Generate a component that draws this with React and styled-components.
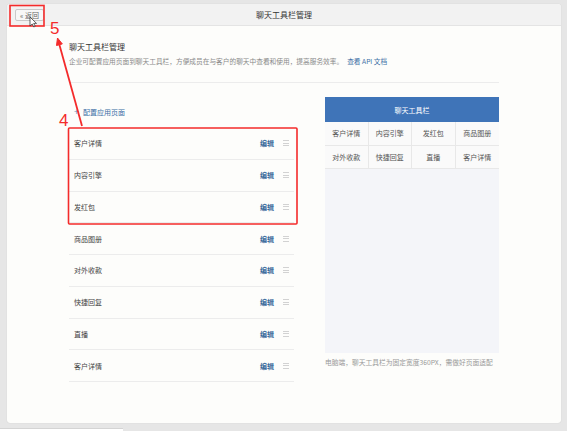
import React from "react";
import styled, { createGlobalStyle } from "styled-components";

const GlobalStyle = createGlobalStyle`
  html, body { margin: 0; padding: 0; }
  body {
    background: #e6e6e6;
    font-family: "Noto Sans CJK SC", "Noto Sans", sans-serif;
    color: #333;
    width: 567px;
    height: 431px;
    overflow: hidden;
  }
`;

const Page = styled.div`
  position: relative;
  width: 567px;
  height: 431px;
  padding: 4px 6px 0 7px;
  box-sizing: border-box;
`;

const Card = styled.div`
  width: 554px;
  height: 419px;
  background: #fdfdfb;
  border-radius: 3px;
  box-shadow: 0 0 1px rgba(0, 0, 0, 0.18);
  overflow: hidden;
`;

const Header = styled.div`
  height: 22px;
  background: #f2f2f2;
  border-bottom: 1px solid #e4e4e4;
  box-sizing: border-box;
  display: grid;
  grid-template-columns: 1fr auto 1fr;
  align-items: center;
`;

const BackButton = styled.button`
  justify-self: start;
  margin-left: 8px;
  height: 12px;
  padding: 0 4px;
  border: 1px solid #c9c9c9;
  border-radius: 2px;
  background: #f7f7f7;
  color: #666;
  font-family: inherit;
  font-size: 7px;
  line-height: 10px;
  display: flex;
  align-items: center;
  gap: 1px;
`;

const HeaderTitle = styled.div`
  font-size: 8px;
  line-height: 10px;
  color: #333;
`;

const Content = styled.div`
  padding-left: 62px;
`;

const Heading = styled.div`
  margin-top: 16px;
  font-size: 8px;
  line-height: 10px;
  color: #333;
`;

const Description = styled.div`
  margin-top: 5px;
  font-size: 6.7px;
  line-height: 9px;
  color: #8a8a8a;
  white-space: nowrap;
`;

const Link = styled.a`
  margin-left: 4px;
  color: #3b6ea5;
  text-decoration: none;
`;

const Divider = styled.div`
  margin-top: 16px;
  width: 430px;
  height: 1px;
  background: #ececec;
`;

const Columns = styled.div`
  margin-top: 14px;
  display: flex;
  gap: 31px;
  align-items: flex-start;
`;

const ListColumn = styled.div`
  width: 225px;
  padding-top: 10px;
`;

const AddLink = styled.div`
  height: 10px;
  margin-bottom: 11px;
  padding-left: 5px;
  display: flex;
  align-items: center;
  gap: 4px;
  font-size: 7px;
  line-height: 10px;
  color: #3b6ea5;
`;

const Plus = styled.span`
  font-size: 9px;
  color: #6b8fb8;
`;

const Row = styled.div`
  height: 31.75px;
  box-sizing: border-box;
  border-bottom: 1px solid #ececec;
  display: flex;
  align-items: center;
  padding: 0 5px;
  font-size: 7px;
`;

const RowName = styled.span`
  flex: 1;
  color: #444;
`;

const EditLink = styled.span`
  color: #3a6a9c;
  font-weight: 700;
  margin-right: 9px;
`;

const DragHandle = styled.span`
  width: 6px;
  display: flex;
  flex-direction: column;
  gap: 1.5px;
  & > i {
    display: block;
    height: 1px;
    background: #d2d2d2;
  }
`;

const Preview = styled.div`
  width: 174px;
`;

const PreviewBox = styled.div`
  height: 256px;
  background: #f4f5f9;
`;

const PreviewHeader = styled.div`
  height: 25px;
  background: #3f74b8;
  color: #fff;
  font-size: 7px;
  display: flex;
  align-items: center;
  justify-content: center;
`;

const PreviewGrid = styled.div`
  display: grid;
  grid-template-columns: repeat(4, 1fr);
  grid-auto-rows: 23.5px;
  background: #fafafa;
`;

const Cell = styled.div`
  display: flex;
  align-items: center;
  justify-content: center;
  font-size: 7px;
  color: #555;
  border-bottom: 1px solid #e8e8e8;
  border-right: ${(p) => (p.$last ? "none" : "1px solid #e8e8e8")};
`;

const Caption = styled.div`
  margin-top: 5px;
  font-size: 6.75px;
  line-height: 9px;
  color: #9a9a9a;
  white-space: nowrap;
`;

const FooterTab = styled.div`
  margin-top: 5px;
  margin-left: -7px;
  width: 123px;
  height: 3px;
  background: #fff;
  border-top: 1px solid #d4d4d4;
`;

const Annotations = styled.svg`
  position: absolute;
  left: 0;
  top: 0;
  pointer-events: none;
`;

const Marker = styled.span`
  position: absolute;
  left: ${(p) => p.$x}px;
  top: ${(p) => p.$y}px;
  font-family: "Liberation Sans", Arial, sans-serif;
  font-size: 17px;
  line-height: 17px;
  color: #f42b2b;
  pointer-events: none;
`;

const items = ["客户详情", "内容引擎", "发红包", "商品图册", "对外收款", "快捷回复", "直播", "客户详情"];
const toolbar = ["客户详情", "内容引擎", "发红包", "商品图册", "对外收款", "快捷回复", "直播", "客户详情"];

export default function App() {
  return (
    <>
      <GlobalStyle />
      <Page>
        <Card>
          <Header>
            <BackButton>« 返回</BackButton>
            <HeaderTitle>聊天工具栏管理</HeaderTitle>
            <span />
          </Header>
          <Content>
            <Heading>聊天工具栏管理</Heading>
            <Description>
              企业可配置应用页面到聊天工具栏，方便成员在与客户的聊天中查看和使用，提高服务效率。
              <Link>查看 API 文档</Link>
            </Description>
            <Divider />
            <Columns>
              <ListColumn>
                <AddLink>
                  <Plus>+</Plus>配置应用页面
                </AddLink>
                {items.map((name, i) => (
                  <Row key={i}>
                    <RowName>{name}</RowName>
                    <EditLink>编辑</EditLink>
                    <DragHandle>
                      <i />
                      <i />
                      <i />
                    </DragHandle>
                  </Row>
                ))}
              </ListColumn>
              <Preview>
                <PreviewBox>
                  <PreviewHeader>聊天工具栏</PreviewHeader>
                  <PreviewGrid>
                    {toolbar.map((t, i) => (
                      <Cell key={i} $last={i % 4 === 3}>
                        {t}
                      </Cell>
                    ))}
                  </PreviewGrid>
                </PreviewBox>
                <Caption>电脑端，聊天工具栏为固定宽度360PX，需做好页面适配</Caption>
              </Preview>
            </Columns>
          </Content>
        </Card>
        <FooterTab />
        <Annotations width="567" height="431" viewBox="0 0 567 431">
          <rect x="10" y="5.5" width="34" height="20.5" fill="none" stroke="#f42b2b" strokeWidth="1.6" />
          <rect x="68.5" y="128" width="228.5" height="96" fill="none" stroke="#f42b2b" strokeWidth="1.6" rx="1" />
          <line x1="82" y1="126" x2="59.4" y2="44.7" stroke="#f42b2b" strokeWidth="1.8" />
          <polygon points="57.5,38 62.3,43.9 56.5,45.5" fill="#f42b2b" stroke="#f42b2b" strokeWidth="1" />
          <path
            d="M30 17 L30 26 L32.2 24 L33.8 27 L35.2 26.3 L33.7 23.4 L36.5 23.4 Z"
            fill="#fff"
            stroke="#222"
            strokeWidth="0.7"
            strokeLinejoin="round"
          />
        </Annotations>
        <Marker $x={50} $y={20}>5</Marker>
        <Marker $x={59} $y={112}>4</Marker>
      </Page>
    </>
  );
}
